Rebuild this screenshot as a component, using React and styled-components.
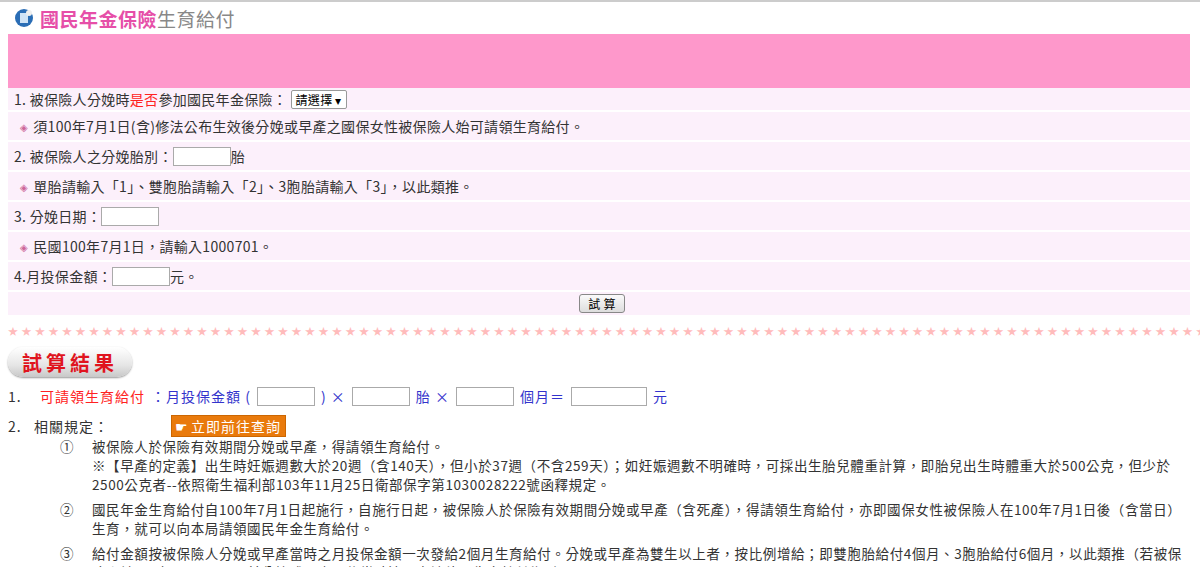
import React from "react";
import styled, { createGlobalStyle } from "styled-components";

const G = createGlobalStyle`
  body{margin:0;background:#fff;font-family:"Microsoft JhengHei","Noto Sans CJK TC",sans-serif;font-size:14px;color:#333;}
`;
const Top = styled.div`border-top:2px solid #ccc;height:0;`;
const Title = styled.div`display:flex;align-items:center;gap:6px;height:32px;padding-left:14px;font-size:19px;letter-spacing:0.5px;`;
const Pink = styled.span`color:#e64fa8;font-weight:bold;`;
const Gray = styled.span`color:#888;`;
const Band = styled.div`margin:0 10px 0 8px;height:54px;background:#fe98cb;`;
const Form = styled.div`margin:0 10px 0 8px;display:flex;flex-direction:column;gap:2px;`;
const Row = styled.div`background:#fcf0fb;height:${p=>p.h||28}px;display:flex;align-items:center;padding-left:${p=>p.note?12:6}px;white-space:nowrap;letter-spacing:0.3px;justify-content:${p=>p.center?"center":"flex-start"};`;
const Dia = styled.span`color:#c69;font-size:10px;margin-right:5px;`;
const Red = styled.span`color:#f22;`;
const Input = styled.span`display:inline-block;width:${p=>p.w||56}px;height:17px;border:1px solid #aaa;background:#fff;`;
const Sel = styled.span`display:inline-block;border:1px solid #999;border-radius:2px;padding:0 4px;font-size:12px;background:#fff;color:#000;`;
const Btn = styled.span`display:inline-block;border:1px solid #888;border-radius:3px;background:linear-gradient(#fafafa,#ddd);padding:0 8px;font-size:12px;color:#000;`;
const Stars = styled.div`color:#fbb;font-size:10px;letter-spacing:3.5px;padding-left:8px;margin-top:8px;overflow:hidden;white-space:nowrap;height:14px;`;
const Pill = styled.div`margin:10px 0 0 8px;width:124px;height:30px;border-radius:15px;background:linear-gradient(#fff,#e6e6e6 60%,#c8c8c8);box-shadow:0 1px 2px #999;color:#e0141e;font-size:20px;font-weight:bold;letter-spacing:4px;display:flex;align-items:center;justify-content:center;`;
const Line = styled.div`display:flex;align-items:center;gap:6px;padding-left:8px;height:${p=>p.h||28}px;font-size:14px;letter-spacing:1px;color:#333;white-space:nowrap;`;
const Blue = styled.span`color:#33c;`;
const Orange = styled.span`display:inline-flex;align-items:center;gap:2px;background:#e97a0c;color:#fff;padding:0 4px 0 3px;margin-left:56px;font-size:14px;border:1px solid #c60;`;
const List = styled.div`padding-left:60px;font-size:13.5px;letter-spacing:0.6px;color:#333;display:flex;flex-direction:column;gap:6px;`;
const Item = styled.div`display:grid;grid-template-columns:32px 1fr;line-height:19px;padding-right:10px;`;

export default function App(){
  return <>
    <G/>
    <Top/>
    <Title>
      <svg width="20" height="20" viewBox="0 0 20 20"><circle cx="10" cy="10" r="9" fill="#2a6db5"/><rect x="6" y="5" width="8" height="10" fill="#cfe3f6"/><circle cx="15" cy="5" r="3" fill="#eee"/></svg>
      <span><Pink>國民年金保險</Pink><Gray>生育給付</Gray></span>
    </Title>
    <Band/>
    <Form>
      <Row h={22}>1. 被保險人分娩時<Red>是否</Red>參加國民年金保險：&nbsp;<Sel>請選擇 ▾</Sel></Row>
      <Row note><Dia>◈</Dia>須100年7月1日(含)修法公布生效後分娩或早產之國保女性被保險人始可請領生育給付。</Row>
      <Row>2. 被保險人之分娩胎別：<Input/>胎</Row>
      <Row note><Dia>◈</Dia>單胎請輸入「1」、雙胞胎請輸入「2」、3胞胎請輸入「3」，以此類推。</Row>
      <Row>3. 分娩日期：<Input/></Row>
      <Row note><Dia>◈</Dia>民國100年7月1日，請輸入1000701。</Row>
      <Row>4.月投保金額：<Input/>元。</Row>
      <Row h={23} center><Btn>試 算</Btn></Row>
    </Form>
    <Stars>{"★".repeat(92)}</Stars>
    <Pill>試算結果</Pill>
    <Line h={38}>1. &nbsp;&nbsp;<Red>可請領生育給付</Red><Blue>：月投保金額 (</Blue><Input w={56}/><Blue>) ×</Blue><Input w={56}/><Blue>胎 ×</Blue><Input w={56}/><Blue>個月＝</Blue><Input w={74}/><Blue>元</Blue></Line>
    <Line h={22}>2. &nbsp;&nbsp;相關規定：<Orange><span>☛</span>立即前往查詢</Orange></Line>
    <List>
      <Item><span>①</span><span>被保險人於保險有效期間分娩或早產，得請領生育給付。<br/>※【早產的定義】出生時妊娠週數大於20週（含140天），但小於37週（不含259天）；如妊娠週數不明確時，可採出生胎兒體重計算，即胎兒出生時體重大於500公克，但少於2500公克者--依照衛生福利部103年11月25日衛部保字第1030028222號函釋規定。</span></Item>
      <Item><span>②</span><span>國民年金生育給付自100年7月1日起施行，自施行日起，被保險人於保險有效期間分娩或早產（含死產），得請領生育給付，亦即國保女性被保險人在100年7月1日後（含當日）生育，就可以向本局請領國民年金生育給付。</span></Item>
      <Item><span>③</span><span>給付金額按被保險人分娩或早產當時之月投保金額一次發給2個月生育給付。分娩或早產為雙生以上者，按比例增給；即雙胞胎給付4個月、3胞胎給付6個月，以此類推（若被保險人於104年12月17日以前分娩或早產，依當時適用之法律，生育給付為1個月）。</span></Item>
    </List>
  </>;
}
